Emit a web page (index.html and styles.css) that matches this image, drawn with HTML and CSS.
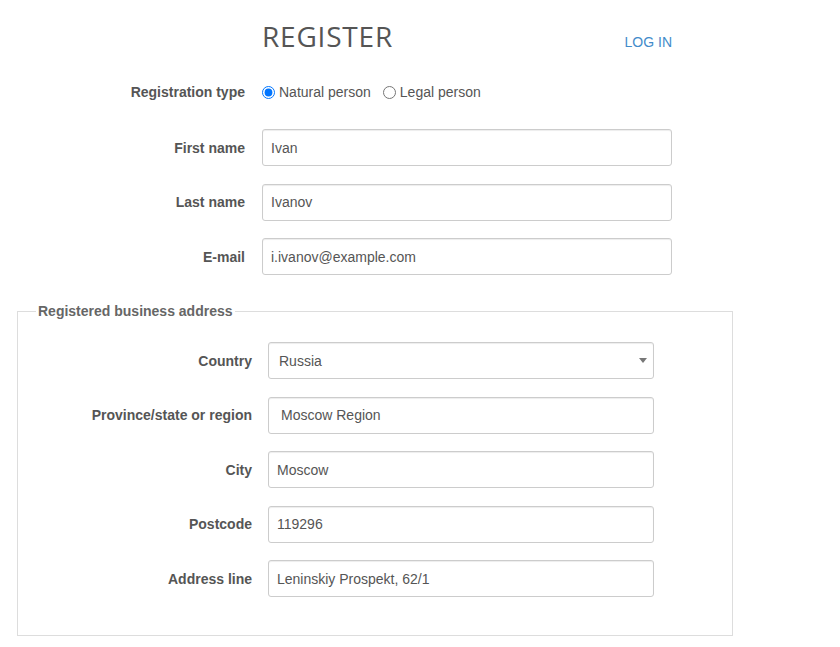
FILE: index.html
```html
<!DOCTYPE html>
<html lang="en">
<head>
<meta charset="utf-8">
<title>Register</title>
<link rel="stylesheet" href="styles.css">
</head>
<body>
<main class="page">
  <div class="grid header">
    <span></span>
    <div class="header-main">
      <h1 class="title">REGISTER</h1>
      <a class="login" href="#">LOG IN</a>
    </div>
  </div>

  <form class="form">
    <div class="grid field field-type">
      <span class="label">Registration type</span>
      <div class="radios">
        <label class="radio"><input type="radio" name="type" checked> Natural person</label>
        <label class="radio"><input type="radio" name="type"> Legal person</label>
      </div>
    </div>

    <div class="grid field">
      <label class="label" for="first">First name</label>
      <input class="control" id="first" type="text" value="Ivan">
    </div>
    <div class="grid field">
      <label class="label" for="last">Last name</label>
      <input class="control" id="last" type="text" value="Ivanov">
    </div>
    <div class="grid field">
      <label class="label" for="email">E-mail</label>
      <input class="control" id="email" type="email" value="i.ivanov@example.com">
    </div>

    <fieldset class="address">
      <legend class="legend">Registered business address</legend>

      <div class="grid-inner field">
        <label class="label" for="country">Country</label>
        <div class="select-wrap">
          <select class="control select" id="country">
            <option>Russia</option>
          </select>
        </div>
      </div>
      <div class="grid-inner field">
        <label class="label" for="region">Province/state or region</label>
        <input class="control control-indent" id="region" type="text" value="Moscow Region">
      </div>
      <div class="grid-inner field">
        <label class="label" for="city">City</label>
        <input class="control" id="city" type="text" value="Moscow">
      </div>
      <div class="grid-inner field">
        <label class="label" for="postcode">Postcode</label>
        <input class="control" id="postcode" type="text" value="119296">
      </div>
      <div class="grid-inner field">
        <label class="label" for="address">Address line</label>
        <input class="control" id="address" type="text" value="Leninskiy Prospekt, 62/1">
      </div>
    </fieldset>
  </form>
</main>
</body>
</html>
```

FILE: styles.css
```css
* {
  box-sizing: border-box;
}

html,
body {
  margin: 0;
  background: #fff;
}

body {
  font-family: "Liberation Sans", Arial, sans-serif;
  font-size: 14px;
  color: #555;
}

.page {
  width: 840px;
  padding: 17px 17px 0;
}

/* two-column rows: label | control */
.grid {
  display: grid;
  grid-template-columns: 228px 410px;
  column-gap: 17px;
  align-items: center;
}

.grid-inner {
  display: grid;
  grid-template-columns: 216px 386px;
  column-gap: 16px;
  align-items: center;
}

.header-main {
  display: flex;
  justify-content: space-between;
  align-items: baseline;
}

.title {
  margin: 0;
  font-family: "Open Sans", sans-serif;
  font-size: 28px;
  font-weight: 400;
  line-height: normal;
  color: #555;
  letter-spacing: 0.8px;
}

.login {
  font-size: 14px;
  color: #428bca;
  text-decoration: none;
}

.form {
  margin: 0;
}

.field {
  margin-top: 17.5px;
}

.field-type {
  margin-top: 27px;
  margin-bottom: 27px;
  line-height: 20px;
}

.field-type + .field {
  margin-top: 0;
}

.label {
  text-align: right;
  font-weight: bold;
  color: #555;
}

.radios {
  display: flex;
  gap: 12px;
  color: #555;
}

.radio {
  display: inline-flex;
  align-items: center;
  gap: 4px;
}

.radio input {
  margin: 0;
  width: 13px;
  height: 13px;
  accent-color: #0075ff;
}

.control {
  display: block;
  width: 100%;
  height: 37px;
  margin: 0;
  padding: 0 8px;
  font-family: "Liberation Sans", Arial, sans-serif;
  font-size: 14px;
  color: #555;
  background: #fff;
  border: 1px solid #ccc;
  border-radius: 3px;
  box-shadow: inset 0 1px 1px rgba(0, 0, 0, 0.075);
  outline: none;
}

.control-indent {
  padding-left: 12px;
}

.select-wrap {
  position: relative;
}

.select {
  appearance: none;
  -webkit-appearance: none;
  padding-left: 10px;
}

/* dropdown caret */
.select-wrap::after {
  content: "";
  position: absolute;
  right: 7px;
  top: 16px;
  border-left: 4px solid transparent;
  border-right: 4px solid transparent;
  border-top: 5px solid #777;
  pointer-events: none;
}

.address {
  width: 716px;
  margin: 26px 0 0;
  padding: 21px 18px 38px;
  border: 1px solid #ddd;
  min-width: 0;
}

.address .field:first-of-type {
  margin-top: 0;
}

.legend {
  padding: 0 2px;
  font-weight: bold;
  line-height: 20px;
  color: #666;
}
```
